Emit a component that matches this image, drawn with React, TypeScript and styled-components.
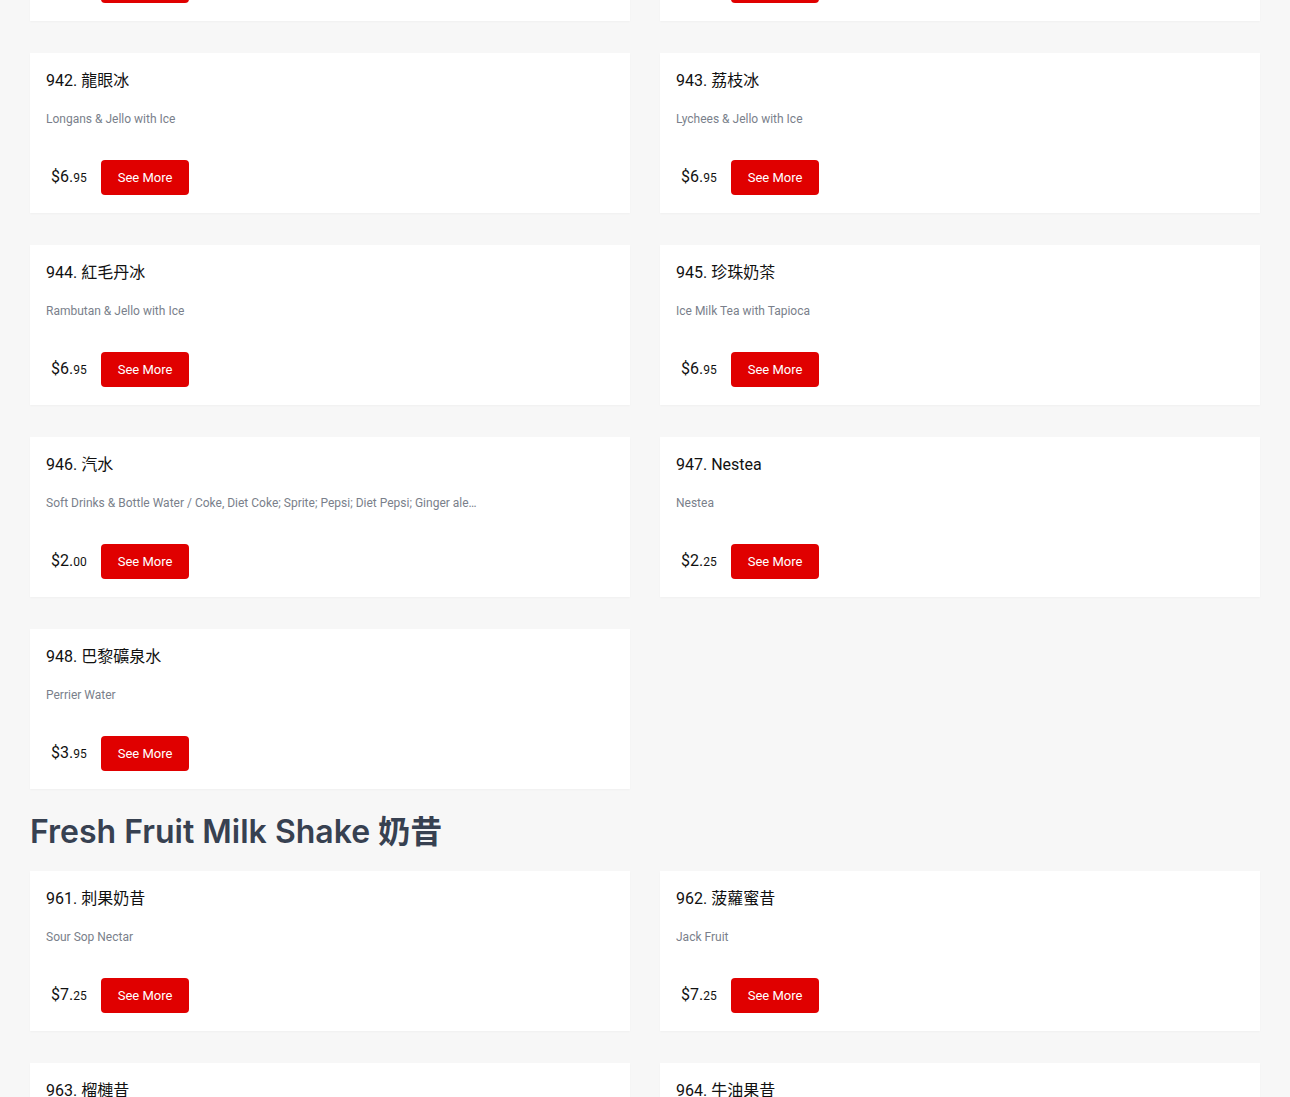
import styled, { createGlobalStyle } from 'styled-components';

const GlobalStyle = createGlobalStyle`
  html, body {
    margin: 0;
    padding: 0;
    background: #f7f7f7;
    overflow: hidden;
  }
  * {
    box-sizing: border-box;
  }
`;

const Page = styled.main`
  padding: 0 30px;
  margin-top: -139px;
  font-family: Roboto, 'Noto Sans CJK TC', sans-serif;
`;

const Grid = styled.div`
  display: grid;
  grid-template-columns: 600px 600px;
  column-gap: 30px;
  row-gap: 32px;
`;

const Section = styled.section``;

const SectionTitle = styled.h2`
  margin: 23px 0 19px;
  font-family: Inter, 'Noto Sans CJK TC', sans-serif;
  font-size: 32px;
  line-height: 40px;
  font-weight: 600;
  color: #374151;
`;

const Card = styled.article`
  background: #fff;
  height: 160px;
  padding: 16px 16px 18px;
  box-shadow: 0 1px 2px rgba(0, 0, 0, 0.03);
  display: flex;
  flex-direction: column;
`;

const Name = styled.h3`
  margin: 0;
  font-size: 16px;
  line-height: 24px;
  font-weight: 400;
  color: #111;
`;

const Desc = styled.p`
  margin: 17px 0 0;
  max-width: 432px;
  font-size: 12px;
  line-height: 18px;
  color: #7a7f8b;
  white-space: nowrap;
  overflow: hidden;
  text-overflow: ellipsis;
`;

const PriceRow = styled.div`
  margin-top: auto;
  display: flex;
  align-items: center;
  gap: 14px;
`;

const Price = styled.span`
  padding-left: 5px;
  color: #111;
  font-size: 16px;
  line-height: 20px;
  small {
    font-size: 12px;
  }
`;

const Button = styled.button`
  height: 35px;
  padding: 0 17px;
  border: none;
  border-radius: 4px;
  background: #e00000;
  color: #fff;
  font-family: Roboto, sans-serif;
  font-size: 13px;
  cursor: pointer;
`;

type Item = { no: number; name: string; desc: string; price: string };

const drinks: Item[] = [
  { no: 940, name: '三色冰', desc: 'Three Color Dessert with Ice', price: '6.95' },
  { no: 941, name: '椰汁冰', desc: 'Coconut Juice with Ice', price: '6.95' },
  { no: 942, name: '龍眼冰', desc: 'Longans & Jello with Ice', price: '6.95' },
  { no: 943, name: '荔枝冰', desc: 'Lychees & Jello with Ice', price: '6.95' },
  { no: 944, name: '紅毛丹冰', desc: 'Rambutan & Jello with Ice', price: '6.95' },
  { no: 945, name: '珍珠奶茶', desc: 'Ice Milk Tea with Tapioca', price: '6.95' },
  {
    no: 946,
    name: '汽水',
    desc: 'Soft Drinks & Bottle Water / Coke, Diet Coke; Sprite; Pepsi; Diet Pepsi; Ginger ale; Bottle Water',
    price: '2.00',
  },
  { no: 947, name: 'Nestea', desc: 'Nestea', price: '2.25' },
  { no: 948, name: '巴黎礦泉水', desc: 'Perrier Water', price: '3.95' },
];

const shakes: Item[] = [
  { no: 961, name: '刺果奶昔', desc: 'Sour Sop Nectar', price: '7.25' },
  { no: 962, name: '菠蘿蜜昔', desc: 'Jack Fruit', price: '7.25' },
  { no: 963, name: '榴槤昔', desc: 'Durian', price: '7.25' },
  { no: 964, name: '牛油果昔', desc: 'Avocado', price: '7.25' },
];

function MenuCard({ item }: { item: Item }) {
  const [whole, cents] = item.price.split('.');
  return (
    <Card>
      <Name>
        {item.no}. {item.name}
      </Name>
      <Desc>{item.desc}</Desc>
      <PriceRow>
        <Price>
          ${whole}.<small>{cents}</small>
        </Price>
        <Button>See More</Button>
      </PriceRow>
    </Card>
  );
}

export default function App() {
  return (
    <>
      <GlobalStyle />
      <Page>
        <Section>
          <Grid>
            {drinks.map((item) => (
              <MenuCard key={item.no} item={item} />
            ))}
          </Grid>
        </Section>
        <Section>
          <SectionTitle>Fresh Fruit Milk Shake 奶昔</SectionTitle>
          <Grid>
            {shakes.map((item) => (
              <MenuCard key={item.no} item={item} />
            ))}
          </Grid>
        </Section>
      </Page>
    </>
  );
}
